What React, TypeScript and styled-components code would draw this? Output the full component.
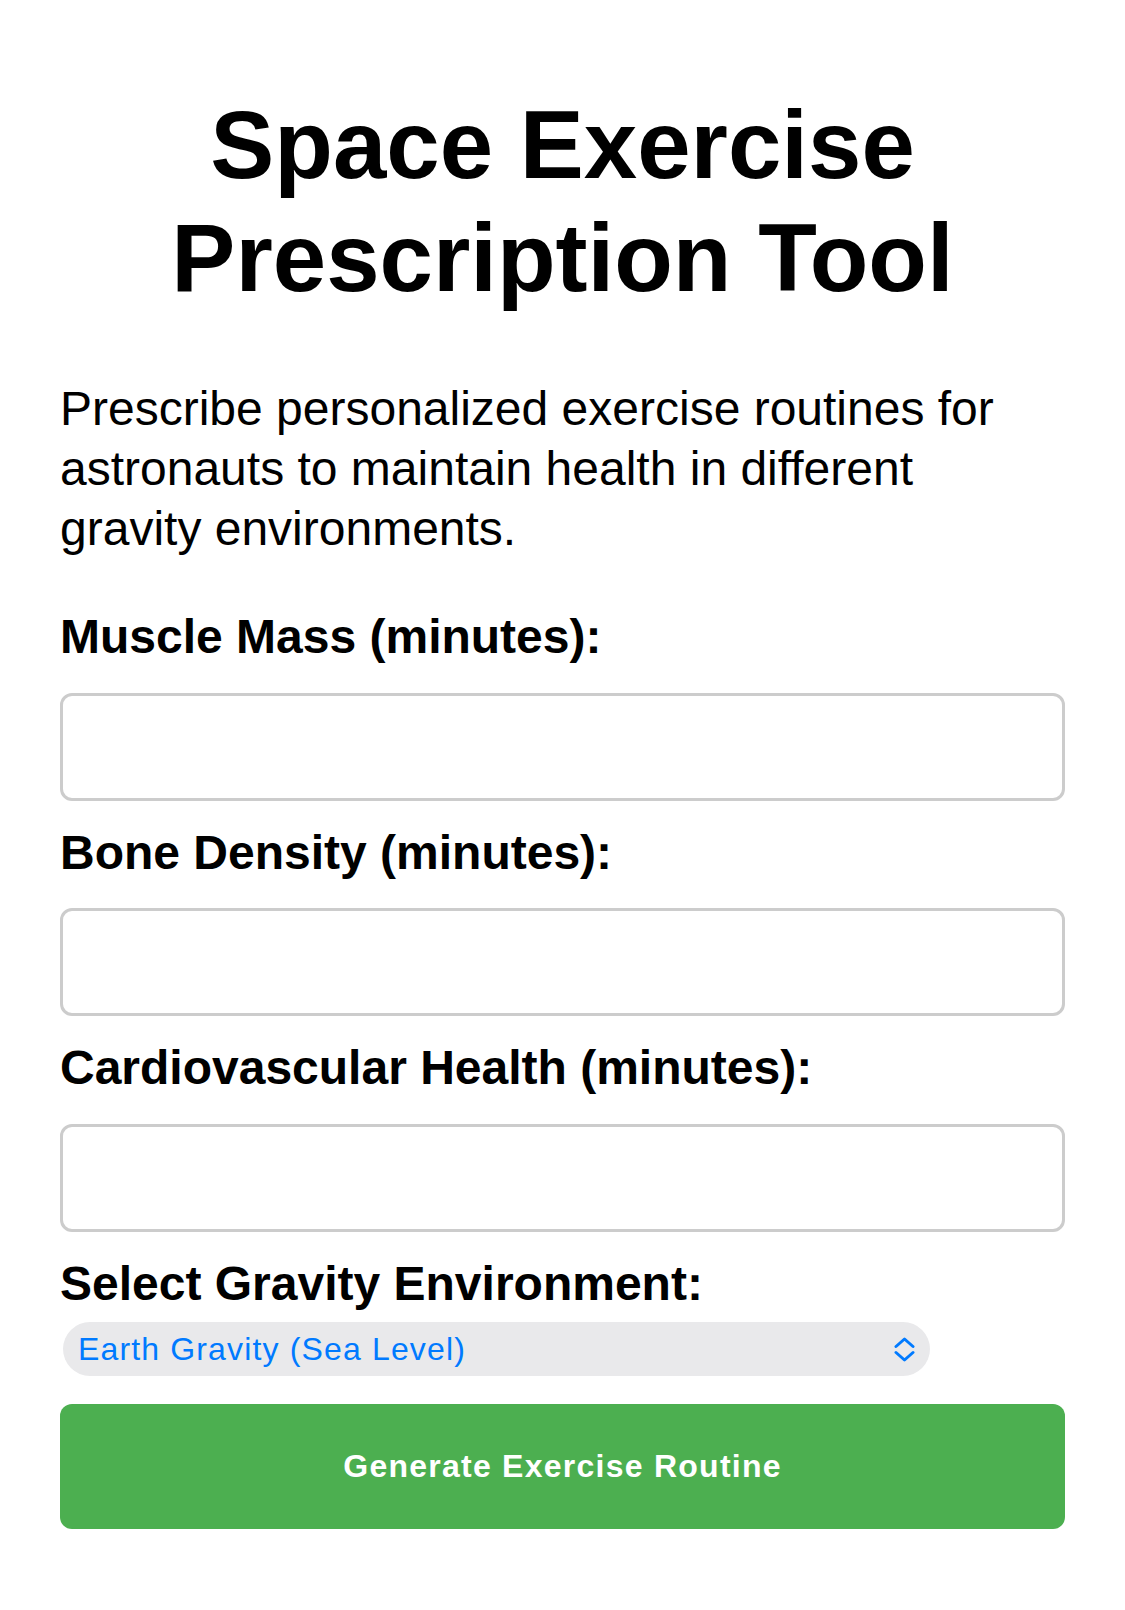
import React, { useState } from "react";
import styled, { createGlobalStyle } from "styled-components";

const GlobalStyle = createGlobalStyle`
  body {
    margin: 0;
    background: #ffffff;
    color: #000000;
    font-family: "Liberation Sans", Arial, Helvetica, sans-serif;
  }
`;

const Page = styled.main`
  padding: 0 60px 82px;
`;

const Title = styled.h1`
  margin: 88px 0 65px;
  font-size: 96px;
  line-height: 113px;
  font-weight: 700;
  text-align: center;
`;

const Intro = styled.p`
  margin: 0 0 49px;
  font-size: 48px;
  line-height: 60px;
`;

const Form = styled.form`
  display: flex;
  flex-direction: column;
`;

const FieldLabel = styled.label`
  display: block;
  margin-bottom: 8px;
  font-size: 48px;
  line-height: 57.6px;
  font-weight: 700;
`;

const TextInput = styled.input`
  box-sizing: border-box;
  width: 100%;
  height: 108px;
  margin: 19px 0 23px;
  padding: 0 30px;
  border: 3px solid #cccccc;
  border-radius: 12px;
  background: #ffffff;
  font-family: inherit;
  font-size: 48px;
  outline: none;
`;

const SelectShell = styled.div`
  display: flex;
  align-items: center;
  width: 867px;
  height: 54px;
  margin: 2px 0 0 3px;
  padding-right: 15px;
  box-sizing: border-box;
  border-radius: 27px;
  background: #e9e9eb;
`;

const Select = styled.select`
  flex: 1;
  height: 100%;
  padding: 0 0 0 15px;
  border: none;
  background: transparent;
  appearance: none;
  -webkit-appearance: none;
  color: #007aff;
  font-family: "Liberation Sans", Arial, sans-serif;
  font-size: 32px;
  letter-spacing: 1.15px;
  outline: none;
`;

const SubmitButton = styled.button`
  height: 125px;
  margin-top: 28px;
  border: none;
  border-radius: 12px;
  background: #4caf50;
  color: #ffffff;
  font-family: "Liberation Sans", Arial, sans-serif;
  font-size: 32px;
  font-weight: 700;
  letter-spacing: 1.25px;
  cursor: pointer;
`;

const Chevrons = () => (
  <svg width="21" height="25" viewBox="0 0 21 25" fill="none">
    <path
      d="M2 9.5 L10.5 2 L19 9.5 M2 15.5 L10.5 23 L19 15.5"
      stroke="#007aff"
      strokeWidth="3"
      strokeLinecap="round"
      strokeLinejoin="round"
    />
  </svg>
);

const fields = [
  { id: "muscle", label: "Muscle Mass (minutes):" },
  { id: "bone", label: "Bone Density (minutes):" },
  { id: "cardio", label: "Cardiovascular Health (minutes):" },
];

const App = () => {
  const [gravity, setGravity] = useState("earth");

  return (
    <Page>
      <GlobalStyle />
      <Title>
        Space Exercise
        <br />
        Prescription Tool
      </Title>
      <Intro>
        Prescribe personalized exercise routines for astronauts to maintain
        health in different gravity environments.
      </Intro>
      <Form onSubmit={(e) => e.preventDefault()}>
        {fields.map(({ id, label }) => (
          <React.Fragment key={id}>
            <FieldLabel htmlFor={id}>{label}</FieldLabel>
            <TextInput id={id} type="number" />
          </React.Fragment>
        ))}
        <FieldLabel htmlFor="gravity">Select Gravity Environment:</FieldLabel>
        <SelectShell>
          <Select
            id="gravity"
            value={gravity}
            onChange={(e) => setGravity(e.target.value)}
          >
            <option value="earth">Earth Gravity (Sea Level)</option>
            <option value="moon">Moon Gravity</option>
            <option value="mars">Mars Gravity</option>
            <option value="micro">Microgravity (ISS)</option>
          </Select>
          <Chevrons />
        </SelectShell>
        <SubmitButton type="submit">Generate Exercise Routine</SubmitButton>
      </Form>
    </Page>
  );
};

export default App;
